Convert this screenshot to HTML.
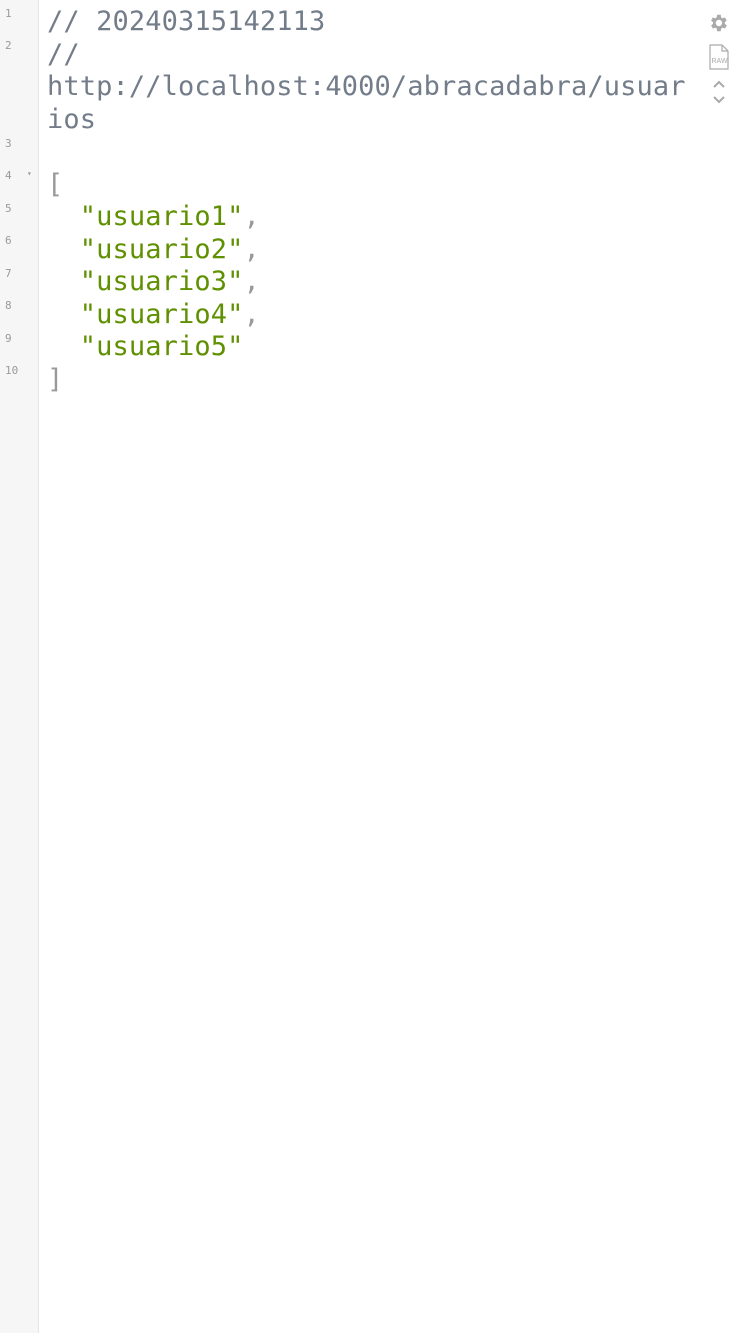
<!DOCTYPE html>
<html><head><meta charset="utf-8"><style>
html,body{margin:0;padding:0;background:#fff;width:750px;height:1333px;overflow:hidden}
.gut{position:absolute;left:0;top:0;width:38px;height:1333px;background:#f6f6f6;border-right:1px solid #e6e6e6}
.ln{position:absolute;left:5px;font:11px "DejaVu Sans Mono",monospace;color:#9a9a9a}
.code{position:absolute;left:47px;top:6px;font:27px/32.5px "DejaVu Sans Mono","Liberation Mono",monospace;white-space:pre;letter-spacing:0.12px}
.c{color:#737d8a}.s{color:#5f9000}.p{color:#999}
</style></head><body>
<div class="gut"></div>
<div class="ln" style="top:7px">1</div>
<div class="ln" style="top:39px">2</div>
<div class="ln" style="top:137px">3</div>
<div class="ln" style="top:169px">4</div>
<div class="ln" style="top:169px;left:27px;font-size:8px">▾</div>
<div class="ln" style="top:202px">5</div>
<div class="ln" style="top:234px">6</div>
<div class="ln" style="top:267px">7</div>
<div class="ln" style="top:299px">8</div>
<div class="ln" style="top:332px">9</div>
<div class="ln" style="top:364px">10</div>
<div class="code"><span class="c">// 20240315142113
//
http://localhost:4000/abracadabra/usuar
ios</span>

<span class="p">[</span>
  <span class="s">"usuario1"</span><span class="p">,</span>
  <span class="s">"usuario2"</span><span class="p">,</span>
  <span class="s">"usuario3"</span><span class="p">,</span>
  <span class="s">"usuario4"</span><span class="p">,</span>
  <span class="s">"usuario5"</span>
<span class="p">]</span></div>
<svg style="position:absolute;left:707px;top:12px" width="22" height="22" viewBox="0 0 24 24"><path fill="#aaa" d="M19.4 13a7.5 7.5 0 0 0 0-2l2.1-1.6-2-3.5-2.5 1a7.6 7.6 0 0 0-1.7-1L15 3h-4l-.4 2.9a7.6 7.6 0 0 0-1.7 1l-2.5-1-2 3.5L6.6 11a7.5 7.5 0 0 0 0 2l-2.1 1.6 2 3.5 2.5-1a7.6 7.6 0 0 0 1.7 1L11 21h4l.4-2.9a7.6 7.6 0 0 0 1.7-1l2.5 1 2-3.5zM13 15.5a3.5 3.5 0 1 1 0-7 3.5 3.5 0 0 1 0 7z"/></svg>
<svg style="position:absolute;left:708px;top:44px" width="22" height="26" viewBox="0 0 22 26"><path fill="none" stroke="#aaa" stroke-width="1.2" d="M2 1h12l6 6v18H2z M14 1v6h6"/><text x="3.5" y="19" font-size="7" font-family="Liberation Sans,sans-serif" fill="#aaa">RAW</text></svg>
<svg style="position:absolute;left:712px;top:80px" width="14" height="24" viewBox="0 0 14 24"><path fill="none" stroke="#aaa" stroke-width="2" d="M2 7l5-5 5 5M2 17l5 5 5-5"/></svg>
</body></html>
